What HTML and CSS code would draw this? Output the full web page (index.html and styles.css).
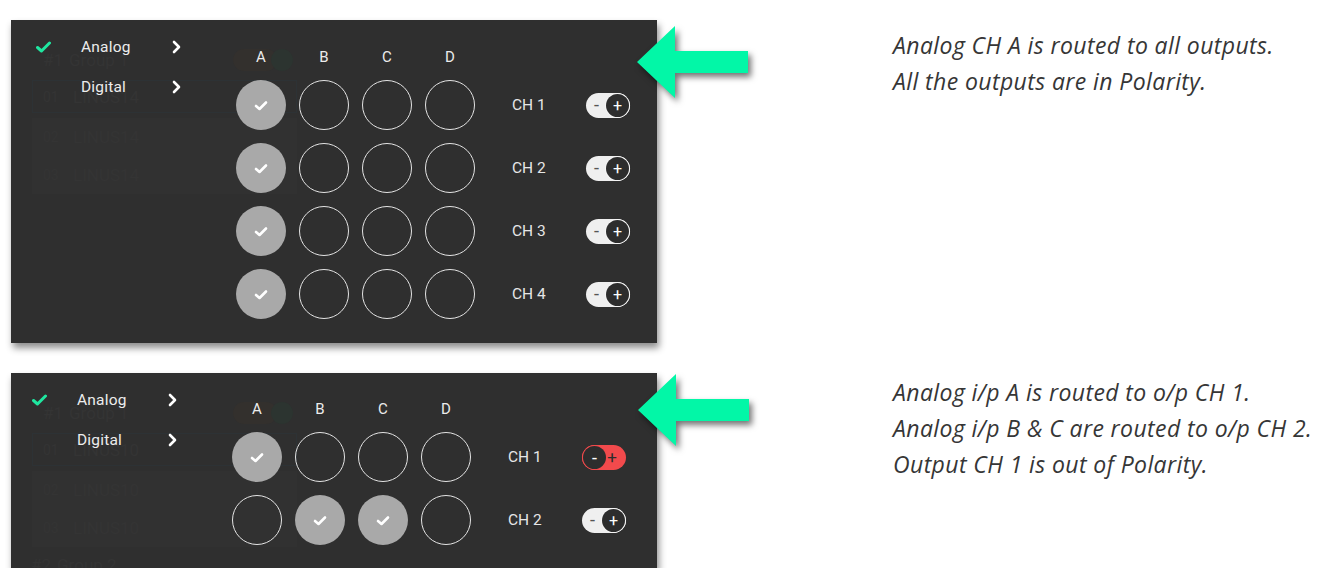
FILE: index.html
```html
<!DOCTYPE html>
<html lang="en">
<head>
<meta charset="utf-8">
<title>Routing matrix</title>
<link rel="stylesheet" href="styles.css">
</head>
<body>
<div class="page">

  <section class="example ex1">
    <div class="panel panel-tall">
      <div class="ghost">
        <div class="ghost-group"><span class="gnum">#1</span><span class="gname">Group 1</span><span class="gtoggle"></span><span class="gdot"></span></div>
        <div class="ghost-row ghost-selected"><span class="gnum">01</span><span class="gname">LINUS14</span></div>
        <div class="ghost-box">
          <div class="ghost-row"><span class="gnum">02</span><span class="gname">LINUS14</span></div>
          <div class="ghost-row"><span class="gnum">03</span><span class="gname">LINUS14</span></div>
        </div>
      </div>
      <div class="overlay">
        <ul class="menu">
          <li class="menu-item">
            <span class="mcheck"><svg width="15" height="12" viewBox="0 0 15 12"><polyline points="1.5,6.5 5.5,10 13.5,2" fill="none" stroke="#1fe7a0" stroke-width="3" stroke-linecap="round" stroke-linejoin="round"/></svg></span>
            <span class="mlabel">Analog</span>
            <svg class="chev" width="9" height="14" viewBox="0 0 9 14"><polyline points="2,2 7,7 2,12" fill="none" stroke="#fff" stroke-width="2.6" stroke-linecap="round" stroke-linejoin="round"/></svg>
          </li>
          <li class="menu-item">
            <span class="mcheck"></span>
            <span class="mlabel">Digital</span>
            <svg class="chev" width="9" height="14" viewBox="0 0 9 14"><polyline points="2,2 7,7 2,12" fill="none" stroke="#fff" stroke-width="2.6" stroke-linecap="round" stroke-linejoin="round"/></svg>
          </li>
        </ul>
        <div class="matrix">
          <span class="col-head">A</span><span class="col-head">B</span><span class="col-head">C</span><span class="col-head">D</span><span></span><span></span>

          <span class="node on"><svg width="14" height="11" viewBox="0 0 14 11"><polyline points="2,6 5.5,9 12,2.5" fill="none" stroke="#fff" stroke-width="2.6" stroke-linecap="round" stroke-linejoin="round"/></svg></span><span class="node"></span><span class="node"></span><span class="node"></span>
          <span class="ch">CH 1</span>
          <span class="toggle"><span class="sign">-</span><span class="knob">+</span></span>

          <span class="node on"><svg width="14" height="11" viewBox="0 0 14 11"><polyline points="2,6 5.5,9 12,2.5" fill="none" stroke="#fff" stroke-width="2.6" stroke-linecap="round" stroke-linejoin="round"/></svg></span><span class="node"></span><span class="node"></span><span class="node"></span>
          <span class="ch">CH 2</span>
          <span class="toggle"><span class="sign">-</span><span class="knob">+</span></span>

          <span class="node on"><svg width="14" height="11" viewBox="0 0 14 11"><polyline points="2,6 5.5,9 12,2.5" fill="none" stroke="#fff" stroke-width="2.6" stroke-linecap="round" stroke-linejoin="round"/></svg></span><span class="node"></span><span class="node"></span><span class="node"></span>
          <span class="ch">CH 3</span>
          <span class="toggle"><span class="sign">-</span><span class="knob">+</span></span>

          <span class="node on"><svg width="14" height="11" viewBox="0 0 14 11"><polyline points="2,6 5.5,9 12,2.5" fill="none" stroke="#fff" stroke-width="2.6" stroke-linecap="round" stroke-linejoin="round"/></svg></span><span class="node"></span><span class="node"></span><span class="node"></span>
          <span class="ch">CH 4</span>
          <span class="toggle"><span class="sign">-</span><span class="knob">+</span></span>
        </div>
      </div>
    </div>
    <svg class="arrow" width="111" height="72" viewBox="0 0 111 72"><polygon points="0,36 38,0 38,25 111,25 111,47 38,47 38,72" fill="#02f7a7"/></svg>
    <div class="note">
      <p>Analog CH A is routed to all outputs.</p>
      <p>All the outputs are in Polarity.</p>
    </div>
  </section>

  <section class="example ex2">
    <div class="panel panel-short">
      <div class="ghost">
        <div class="ghost-group"><span class="gnum">#1</span><span class="gname">Group 1</span><span class="gtoggle"></span><span class="gdot"></span></div>
        <div class="ghost-row ghost-selected"><span class="gnum">01</span><span class="gname">LINUS10</span></div>
        <div class="ghost-box">
          <div class="ghost-row"><span class="gnum">02</span><span class="gname">LINUS10</span></div>
          <div class="ghost-row"><span class="gnum">03</span><span class="gname">LINUS10</span></div>
        </div>
        <div class="ghost-group ghost-group2"><span class="gnum">#2</span><span class="gname">Group 2</span></div>
      </div>
      <div class="overlay">
        <ul class="menu">
          <li class="menu-item">
            <span class="mcheck"><svg width="15" height="12" viewBox="0 0 15 12"><polyline points="1.5,6.5 5.5,10 13.5,2" fill="none" stroke="#1fe7a0" stroke-width="3" stroke-linecap="round" stroke-linejoin="round"/></svg></span>
            <span class="mlabel">Analog</span>
            <svg class="chev" width="9" height="14" viewBox="0 0 9 14"><polyline points="2,2 7,7 2,12" fill="none" stroke="#fff" stroke-width="2.6" stroke-linecap="round" stroke-linejoin="round"/></svg>
          </li>
          <li class="menu-item">
            <span class="mcheck"></span>
            <span class="mlabel">Digital</span>
            <svg class="chev" width="9" height="14" viewBox="0 0 9 14"><polyline points="2,2 7,7 2,12" fill="none" stroke="#fff" stroke-width="2.6" stroke-linecap="round" stroke-linejoin="round"/></svg>
          </li>
        </ul>
        <div class="matrix">
          <span class="col-head">A</span><span class="col-head">B</span><span class="col-head">C</span><span class="col-head">D</span><span></span><span></span>

          <span class="node on"><svg width="14" height="11" viewBox="0 0 14 11"><polyline points="2,6 5.5,9 12,2.5" fill="none" stroke="#fff" stroke-width="2.6" stroke-linecap="round" stroke-linejoin="round"/></svg></span><span class="node"></span><span class="node"></span><span class="node"></span>
          <span class="ch">CH 1</span>
          <span class="toggle toggle-off"><span class="knob">-</span><span class="sign">+</span></span>

          <span class="node"></span><span class="node on"><svg width="14" height="11" viewBox="0 0 14 11"><polyline points="2,6 5.5,9 12,2.5" fill="none" stroke="#fff" stroke-width="2.6" stroke-linecap="round" stroke-linejoin="round"/></svg></span><span class="node on"><svg width="14" height="11" viewBox="0 0 14 11"><polyline points="2,6 5.5,9 12,2.5" fill="none" stroke="#fff" stroke-width="2.6" stroke-linecap="round" stroke-linejoin="round"/></svg></span><span class="node"></span>
          <span class="ch">CH 2</span>
          <span class="toggle"><span class="sign">-</span><span class="knob">+</span></span>
        </div>
      </div>
    </div>
    <svg class="arrow" width="111" height="72" viewBox="0 0 111 72"><polygon points="0,36 38,0 38,25 111,25 111,47 38,47 38,72" fill="#02f7a7"/></svg>
    <div class="note">
      <p>Analog i/p A is routed to o/p CH 1.</p>
      <p>Analog i/p B &amp; C are routed to o/p CH 2.</p>
      <p>Output CH 1 is out of Polarity.</p>
    </div>
  </section>

</div>
</body>
</html>
```

FILE: styles.css
```css
* { box-sizing: border-box; }

body {
  margin: 0;
  background: #ffffff;
  font-family: Roboto, "Liberation Sans", sans-serif;
}

.page {
  padding: 20px 0 0 11px;
  display: flex;
  flex-direction: column;
  gap: 30px;
}

.example {
  position: relative;
  display: flex;
  align-items: flex-start;
}

.panel {
  position: relative;
  width: 646px;
  background: #2f2f2f;
  box-shadow: 2px 5px 7px rgba(0, 0, 0, 0.45);
  overflow: hidden;
  flex-shrink: 0;
}

.panel-tall { height: 323px; }
.panel-short { height: 195px; }

/* faint list underneath the popover */
.ghost {
  padding: 29px 0 0 21px;
  width: 286px;
  font-size: 17px;
  color: #343434;
}

.ghost-group {
  display: flex;
  align-items: center;
  height: 22px;
  padding-left: 11px;
}

.ghost-group .gname { margin-left: 6px; }

.gtoggle {
  width: 44px;
  height: 22px;
  border-radius: 11px;
  background: #33302d;
  margin-left: auto;
}

.gdot {
  width: 22px;
  height: 22px;
  border-radius: 50%;
  background: #2c3430;
  margin: 0 4px 0 -6px;
}

.ghost-row {
  display: flex;
  align-items: center;
  height: 38px;
  padding-left: 11px;
}

.ghost-row .gnum { width: 30px; font-size: 14px; }

.ghost-selected {
  margin-top: 9px;
  height: 33px;
  border: 1px solid #2d3235;
  padding-left: 10px;
}

.ghost-box {
  margin-top: 5px;
  background: #313131;
}

.ghost-group2 {
  margin-top: 7px;
  margin-left: -12px;
}

/* popover + matrix */
.overlay {
  position: absolute;
  inset: 0;
  display: flex;
  padding-left: 25px;
}

.ex2 .overlay { padding-left: 21px; }

.menu {
  list-style: none;
  margin: 0;
  padding: 15px 0 0;
  width: 200px;
  display: flex;
  flex-direction: column;
  gap: 16px;
}

.menu-item {
  display: flex;
  align-items: center;
  height: 24px;
}

.mcheck {
  width: 45px;
  display: flex;
  align-items: center;
}

.mlabel {
  width: 91px;
  font-size: 15.5px;
  color: #ececec;
  letter-spacing: 0.2px;
}

.matrix {
  display: grid;
  grid-template-columns: repeat(4, 50px) 85px 45px;
  grid-template-rows: 20px;
  grid-auto-rows: 50px;
  column-gap: 13px;
  row-gap: 13px;
  padding-top: 27px;
  align-items: center;
  align-content: start;
}

.ex2 .matrix { padding-top: 26px; }

.col-head {
  text-align: center;
  font-size: 15px;
  line-height: 20px;
  color: #ececec;
}

.node {
  width: 50px;
  height: 50px;
  border-radius: 50%;
  border: 1.5px solid #e4e4e4;
  display: flex;
  align-items: center;
  justify-content: center;
}

.node.on {
  background: #a9a9a9;
  border: none;
}

.ch {
  padding-left: 24px;
  font-size: 15.5px;
  color: #e6e6e6;
}

.toggle {
  width: 44px;
  height: 25px;
  border-radius: 13px;
  background: #efefef;
  display: flex;
  align-items: center;
  justify-content: space-between;
  padding: 0 1px 0 8px;
}

.sign {
  font-size: 18px;
  line-height: 1;
  color: #555555;
}

.knob {
  width: 23px;
  height: 23px;
  border-radius: 50%;
  background: #2d2d2d;
  box-shadow: 0 0 0 1px #f6f6f6;
  color: #ffffff;
  font-size: 16px;
  line-height: 23px;
  text-align: center;
}

.toggle-off {
  background: #f24a4c;
  padding: 0 9px 0 1px;
}

.toggle-off .knob {
  box-shadow: 0 0 0 1px #f24a4c;
  font-size: 18px;
}

.toggle-off .sign {
  color: #2d2d2d;
  font-size: 17px;
}

/* annotation arrows */
.arrow {
  position: absolute;
  left: 626px;
  top: 6px;
  filter: drop-shadow(3px 4px 3px rgba(0, 0, 0, 0.55));
}

.ex2 .arrow {
  left: 627px;
  top: 1px;
}

.note {
  margin-left: 236px;
  padding-top: 7px;
  font-family: "Open Sans", Lato, sans-serif;
  font-style: italic;
  font-size: 23px;
  line-height: 36px;
  letter-spacing: 0.4px;
  color: #363636;
}

.ex2 .note { padding-top: 1px; }

.note p { margin: 0; white-space: nowrap; }
```
